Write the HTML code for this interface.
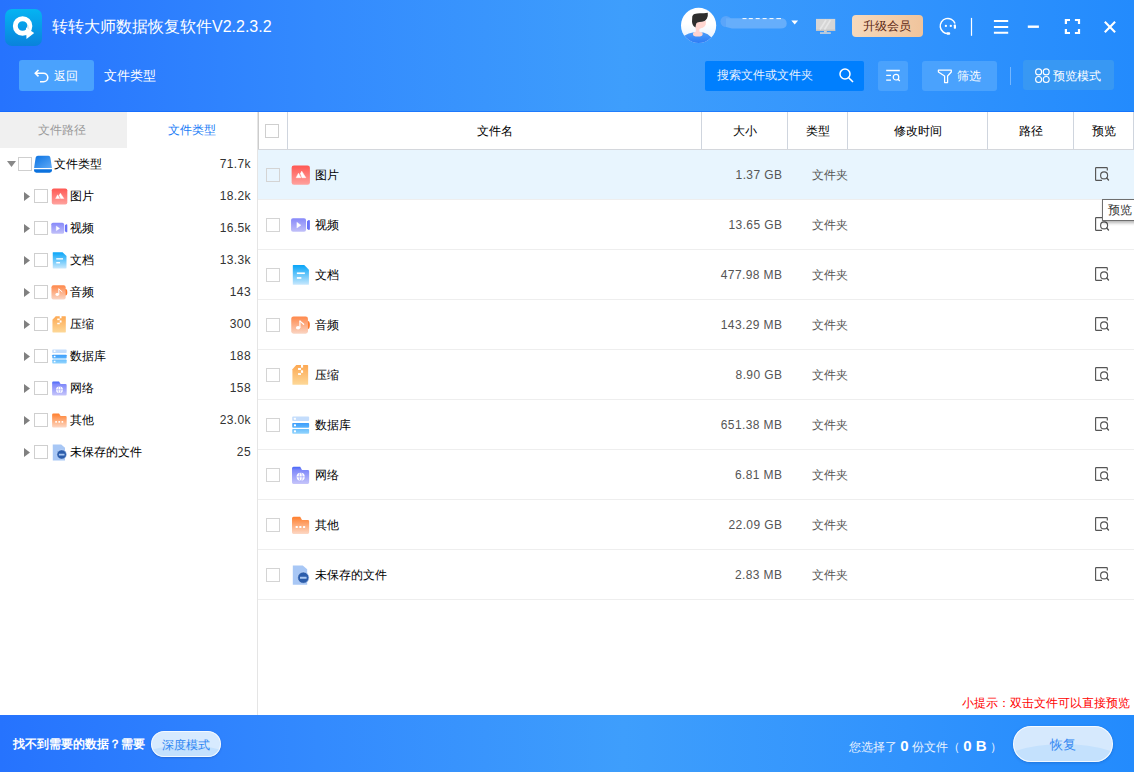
<!DOCTYPE html>
<html><head><meta charset="utf-8">
<style>
*{margin:0;padding:0;box-sizing:border-box}
html,body{width:1134px;height:772px;overflow:hidden;background:#fff;font-family:"Liberation Sans",sans-serif;font-size:12px;color:#333}
.a{position:absolute}
.grad{background:linear-gradient(90deg,#2673fe 0%,#338afe 28%,#3e9efc 55%,#3193fd 80%,#238bfd 100%)}
#hdr{left:0;top:0;width:1134px;height:112px}
.wt{color:#fff}
.btn{background:#4aa2fd;border-radius:3px}
.cb{position:absolute;width:14px;height:14px;border:1px solid #cfcfcf;background:#fff}
.tri-r{position:absolute;width:0;height:0;border-top:5px solid transparent;border-bottom:5px solid transparent;border-left:6px solid #666}
.tri-d{position:absolute;width:0;height:0;border-left:5px solid transparent;border-right:5px solid transparent;border-top:6px solid #777}
.tl{position:absolute;line-height:16px;color:#000}
.cnt{position:absolute;right:6px;text-align:right;line-height:16px;color:#333;letter-spacing:.4px;margin-right:-.4px}
.vl{position:absolute;width:1px;background:#cfd5de}
.hl{position:absolute;height:1px;background:#eeeeee}
.th{position:absolute;top:113px;height:36px;line-height:36px;text-align:center;color:#000}
.row{position:absolute;left:258px;width:876px;height:50px}
.nm{position:absolute;left:315px;line-height:16px;color:#000}
.sz{position:absolute;right:352px;line-height:16px;color:#555;text-align:right;letter-spacing:.4px;margin-right:-.4px}
.tp{position:absolute;left:812px;line-height:16px;color:#555}
</style></head><body>
<svg width="0" height="0" style="position:absolute">
<defs>
<linearGradient id="gPic" x1="0" y1="0" x2="0" y2="1"><stop offset="0" stop-color="#ff5853"/><stop offset="1" stop-color="#ffa29e"/></linearGradient>
<linearGradient id="gVid" x1="0" y1="0" x2="0" y2="1"><stop offset="0" stop-color="#8789fa"/><stop offset="1" stop-color="#c1c0f8"/></linearGradient>
<linearGradient id="gDoc" x1="0" y1="0" x2="0" y2="1"><stop offset="0" stop-color="#08a5f8"/><stop offset="1" stop-color="#c8e8fd"/></linearGradient>
<linearGradient id="gAud" x1="0" y1="0" x2="0" y2="1"><stop offset="0" stop-color="#ff884a"/><stop offset="1" stop-color="#fad5c3"/></linearGradient>
<linearGradient id="gZip" x1="0" y1="0" x2="0" y2="1"><stop offset="0" stop-color="#fda852"/><stop offset="1" stop-color="#fdd898"/></linearGradient>
<linearGradient id="gDb2" x1="0" y1="0" x2="0" y2="1"><stop offset="0" stop-color="#3d9dfb"/><stop offset="1" stop-color="#5cb4fc"/></linearGradient>
<linearGradient id="gDb3" x1="0" y1="0" x2="0" y2="1"><stop offset="0" stop-color="#6bbffd"/><stop offset="1" stop-color="#92d4fd"/></linearGradient>
<linearGradient id="gNet" x1="0" y1="0" x2="0" y2="1"><stop offset="0" stop-color="#4767f7"/><stop offset=".2" stop-color="#7f89fa"/><stop offset="1" stop-color="#c6c5fa"/></linearGradient>
<linearGradient id="gOth" x1="0" y1="0" x2="0" y2="1"><stop offset="0" stop-color="#ff7f2e"/><stop offset="1" stop-color="#fdd8c5"/></linearGradient>
<linearGradient id="gRoot" x1="0" y1="0" x2="1" y2="1"><stop offset="0" stop-color="#0a72e2"/><stop offset="1" stop-color="#5eaaf7"/></linearGradient>
<linearGradient id="gLogo" x1="0" y1="0" x2="0" y2="1"><stop offset="0" stop-color="#05b4f2"/><stop offset="1" stop-color="#0a82dc"/></linearGradient>
<symbol id="iPic" viewBox="0 0 772 772"><rect x="145" y="140" width="470" height="500" rx="60" fill="url(#gPic)"/><g fill="#fff" stroke="#fff" stroke-width="14" stroke-linejoin="round"><path d="M262 455 L322 340 L383 455 Z"/><path d="M372 350 L405 288 L510 455 L412 455 Z"/></g></symbol>
<symbol id="iVid" viewBox="0 0 772 772"><rect x="130" y="210" width="385" height="350" rx="50" fill="url(#gVid)"/><path d="M540 290 L585 258 Q615 250 615 285 V485 Q615 520 585 512 L540 480 Z" fill="#6a73f8"/><path d="M280 315 L385 390 L280 462 Z" fill="#fff" stroke="#fff" stroke-width="10" stroke-linejoin="round"/></symbol>
<symbol id="iDoc" viewBox="0 0 772 772"><path d="M190 130 H470 L590 250 V625 Q590 640 575 640 H190 Q175 640 175 625 V145 Q175 130 190 130 Z" fill="url(#gDoc)"/><rect x="280" y="320" width="205" height="42" fill="#fff"/><rect x="280" y="440" width="115" height="45" fill="#fff"/></symbol>
<symbol id="iAud" viewBox="0 0 772 772"><ellipse cx="562" cy="387" rx="52" ry="103" fill="#ff7a2c"/><rect x="135" y="165" width="430" height="445" rx="60" fill="url(#gAud)"/><rect x="343" y="272" width="30" height="190" fill="#fff"/><path d="M362 285 L455 368" stroke="#fff" stroke-width="30" stroke-linecap="round"/><ellipse cx="310" cy="455" rx="55" ry="44" fill="#fff"/></symbol>
<symbol id="iZip" viewBox="0 0 772 772"><path d="M265 130 H555 Q570 130 570 145 V625 Q570 640 555 640 H180 Q165 640 165 625 V240 Z" fill="url(#gZip)"/><g fill="#fff"><rect x="385" y="125" width="55" height="72"/><rect x="310" y="205" width="75" height="52"/><rect x="385" y="265" width="55" height="65"/><rect x="310" y="338" width="75" height="47"/></g></symbol>
<symbol id="iDb" viewBox="0 0 772 772"><rect x="160" y="170" width="435" height="112" rx="22" fill="#c4ddfc"/><rect x="160" y="335" width="435" height="120" rx="22" fill="url(#gDb2)"/><rect x="160" y="490" width="435" height="120" rx="22" fill="url(#gDb3)"/><g fill="#fff"><rect x="205" y="200" width="52" height="52" rx="10"/><rect x="205" y="367" width="52" height="52" rx="10"/><rect x="205" y="522" width="52" height="52" rx="10"/></g></symbol>
<symbol id="iNet" viewBox="0 0 772 772"><path d="M155 215 Q155 175 195 175 H365 L412 255 H560 Q595 255 595 290 V580 Q595 615 560 615 H190 Q155 615 155 580 Z" fill="url(#gNet)"/><circle cx="378" cy="432" r="105" fill="#fff"/><g fill="none" stroke="#9ea2f9" stroke-width="18"><path d="M270 432 H486"/><ellipse cx="378" cy="432" rx="42" ry="105"/></g></symbol>
<symbol id="iOth" viewBox="0 0 772 772"><path d="M155 215 Q155 175 195 175 H365 L412 255 H560 Q595 255 595 290 V580 Q595 615 560 615 H190 Q155 615 155 580 Z" fill="url(#gOth)"/><g fill="#fff"><rect x="248" y="410" width="55" height="55" rx="14"/><rect x="343" y="410" width="55" height="55" rx="14"/><rect x="438" y="410" width="55" height="55" rx="14"/></g></symbol>
<symbol id="iUns" viewBox="0 0 772 772"><path d="M175 140 H430 L545 240 V640 H175 Z" fill="#a8c7f5"/><circle cx="445" cy="455" r="145" fill="#2c5dab" stroke="#cfe0f8" stroke-width="14"/><rect x="360" y="433" width="170" height="50" rx="6" fill="#a9c8f2"/></symbol>
<symbol id="iPrev" viewBox="0 0 30 30"><g fill="none" stroke="#555" stroke-width="1.15"><path d="M19.3 10.6 V8.3 Q19.3 7.6 18.6 7.6 H8.3 Q7.6 7.6 7.6 8.3 V19.7 Q7.6 20.4 8.3 20.4 H14"/><circle cx="16.1" cy="15.4" r="3.5"/><path d="M18.7 18 L20.5 19.9" stroke-width="1.4" stroke-linecap="round"/></g></symbol>
</defs></svg>

<!-- HEADER -->
<div id="hdr" class="a grad"></div>
<div class="a" style="left:0;top:111px;width:1134px;height:1px;background:rgba(10,100,254,.55)"></div>
<svg class="a" style="left:5px;top:9px" width="37" height="37" viewBox="0 0 37 37"><rect width="37" height="37" rx="7" fill="url(#gLogo)"/><circle cx="17.6" cy="17" r="7.3" fill="none" stroke="#fff" stroke-width="4.9"/><path d="M21 18.5 L29.2 24 L21.5 30 Z" fill="#fff"/><path d="M21.5 18.8 L24.5 21 L23.5 16 Z" fill="#dfe9f0"/></svg>
<div class="a wt" style="left:52px;top:16px;font-size:16px;line-height:22px">转转大师数据恢复软件V2.2.3.2</div>

<div class="a btn" style="left:19px;top:60px;width:75px;height:31px"></div>
<svg class="a" style="left:34px;top:69px" width="16" height="15" viewBox="0 0 16 15"><path d="M4.5 1 L1.3 4.2 L4.5 7.4 M1.6 4.2 H9.5 A4.3 4.3 0 0 1 9.5 12.8 H6" fill="none" stroke="#fff" stroke-width="1.6"/></svg>
<div class="a wt" style="left:54px;top:67px;font-size:12px;line-height:18px">返回</div>
<div class="a wt" style="left:104px;top:67px;font-size:13px;line-height:18px">文件类型</div>

<!-- top right -->
<svg class="a" style="left:660px;top:0" width="474" height="50" viewBox="660 0 474 50">
<defs>
<linearGradient id="gAvBg" x1="0" y1="0" x2="0" y2="1"><stop offset=".45" stop-color="#fff"/><stop offset="1" stop-color="#e2effe"/></linearGradient>
<linearGradient id="gAvBody" x1="0" y1="0" x2="0" y2="1"><stop offset="0" stop-color="#4a9dfb"/><stop offset="1" stop-color="#2a78f4"/></linearGradient>
<clipPath id="avc"><circle cx="698.6" cy="25.4" r="17.6"/></clipPath>
</defs>
<circle cx="698.6" cy="25.4" r="17.6" fill="url(#gAvBg)"/>
<g clip-path="url(#avc)">
<path d="M681 37 L684.2 35.8 Q689 33 692.9 32.6 H703.4 Q708 33.5 711.5 37.5 L716 40 V44 H681 Z" fill="url(#gAvBody)"/>
<ellipse cx="697.8" cy="34" rx="4.9" ry="2.6" fill="#ffd3cf"/>
<rect x="695.8" y="26" width="3.6" height="7" fill="#ffd3cf"/>
<path d="M695.2 22.1 L706 20.9 L705.7 24.4 Q705 26.5 703.4 27.3 L699.3 29.1 L695.8 29.1 Z" fill="#ffd6d1"/>
</g>
<path d="M692.3 16.2 Q693 14.5 694.5 14 Q697 13.2 700 13.2 Q704 13.2 707.8 12.7 Q708.2 16 706.9 18.6 Q705.8 20.3 704.6 20.9 Q702 21.8 699.3 22.1 Q697 22.6 696.4 23.2 Q695.6 25 695.5 27.6 Q693.3 26 692.9 25 Q692 23 692 21.5 Z" fill="#2e2e2e"/>
<circle cx="726" cy="21.5" r="5.5" fill="#5aa5fa"/>
<path d="M726 18.3 H780.5 Q786.7 18.3 786.7 23.5 Q786.7 28.6 780.5 28.6 H732 L726 27 Z" fill="#66aefb"/>
<path d="M742.5 18.6 H746.5 M748.8 18.6 H752.8 M755.7 18.6 H759.7 M762.6 18.6 H766.6 M769.5 18.6 H773.5 M776.4 18.6 H781" stroke="#fff" stroke-width="1"/>
<path d="M791.3 20.6 H798.1 L794.7 24.6 Z" fill="#fff"/>
<rect x="816" y="18.9" width="19.2" height="12" fill="#d6d6d6"/>
<rect x="816" y="29.6" width="19.2" height="1.3" fill="#c4c4c4"/>
<path d="M820 29.5 L826 20 M824.5 29.5 L830.5 20" stroke="#e6e6e6" stroke-width="1.6"/>
<rect x="824" y="30.9" width="2.8" height="1.5" fill="#d0d0d0"/>
<rect x="820" y="32.3" width="10.8" height="1.5" fill="#d6d6d6"/>
<path d="M948.3 33.6 A7.6 7.6 0 1 1 955 23.5" fill="none" stroke="#fff" stroke-width="1.5"/>
<rect x="953.8" y="24.5" width="2.2" height="4.2" rx=".8" fill="#fff"/>
<rect x="946.6" y="32.3" width="3.6" height="2.4" rx="1" fill="#fff"/>
<circle cx="945.9" cy="25.9" r="1.15" fill="#fff"/>
<circle cx="950.8" cy="25.9" r="1.15" fill="#fff"/>
<rect x="970.9" y="17.9" width="1.2" height="17.9" fill="#fff"/>
<path d="M993.9 20.9 H1008.2 M993.9 26.9 H1008.2 M993.9 32.8 H1008.2" stroke="#fff" stroke-width="2"/>
<rect x="1027.8" y="25.5" width="11.1" height="2.4" fill="#fff"/>
<path d="M1065.9 24 V20 H1070 M1074.9 20 H1079 V24 M1079 29 V33 H1074.9 M1070 33 H1065.9 V29" fill="none" stroke="#fff" stroke-width="2.2"/>
<path d="M1104.8 21.8 L1115.1 32.2 M1115.1 21.8 L1104.8 32.2" stroke="#fff" stroke-width="2.1"/>
</svg>
<div class="a" style="left:852px;top:15px;width:71px;height:22px;border-radius:4px;background:linear-gradient(90deg,#f6d9bc,#f0c49c);color:#5a2511;text-align:center;line-height:22px;font-size:12px;text-indent:-2px">升级会员</div>

<!-- toolbar -->
<div class="a" style="left:705px;top:61px;width:159px;height:30px;background:#007ffe;border-radius:2px"></div>
<div class="a wt" style="left:717px;top:67px;line-height:17px;color:#e6f0ff">搜索文件或文件夹</div>
<svg class="a" style="left:839px;top:68px" width="15" height="15" viewBox="0 0 15 15"><circle cx="6" cy="6" r="5" fill="none" stroke="#fff" stroke-width="1.5"/><path d="M9.7 9.7 L14 14" stroke="#fff" stroke-width="1.6"/></svg>
<div class="a btn" style="left:878px;top:61px;width:30px;height:30px"></div>
<svg class="a" style="left:886px;top:69px" width="15" height="14" viewBox="0 0 15 14"><path d="M0.2 1.5 H13.8 M0.2 6.4 H5 M0.2 11.2 H5" stroke="#fff" stroke-width="1.3"/><circle cx="10" cy="8.2" r="2.8" fill="none" stroke="#fff" stroke-width="1.2"/><path d="M12 10.2 L13.8 12" stroke="#fff" stroke-width="1.3"/></svg>
<div class="a btn" style="left:922px;top:61px;width:75px;height:30px"></div>
<svg class="a" style="left:936px;top:68px" width="17" height="17" viewBox="936 68 17 17"><path d="M938.4 70.2 H951.3 V72 L947.6 76 V82.6 H944.6 V76 L938.4 72 Z" fill="none" stroke="#fff" stroke-width="1.25" stroke-linejoin="round"/></svg>
<div class="a wt" style="left:957px;top:68px;line-height:17px">筛选</div>
<div class="a" style="left:1010px;top:67px;width:1px;height:18px;background:rgba(255,255,255,.35)"></div>
<div class="a btn" style="left:1023px;top:60px;width:91px;height:30px;background:#3898f3"></div>
<svg class="a" style="left:1034px;top:68px" width="17" height="16" viewBox="1034 68 17 16"><g fill="none" stroke="#fff" stroke-width="1.1"><circle cx="1038.6" cy="71.9" r="3"/><circle cx="1046.2" cy="71.9" r="3"/><circle cx="1038.6" cy="79.5" r="3"/><circle cx="1046.2" cy="79.5" r="3"/></g></svg>
<div class="a wt" style="left:1053px;top:68px;line-height:17px">预览模式</div>

<!-- LEFT PANEL -->
<div class="a" style="left:0;top:112px;width:127px;height:36px;background:#f0f0f0"></div>
<div class="a" style="left:0;top:112px;width:123px;height:36px;line-height:36px;text-align:center;color:#9a9a9a">文件路径</div>
<div class="a" style="left:127px;top:112px;width:130px;height:36px;line-height:36px;text-align:center;color:#1b7df6">文件类型</div>
<div class="vl" style="left:257px;top:112px;height:603px;background:#e5e5e5"></div>

<div id="tree">
<svg class="a" style="left:7px;top:161px" width="9" height="6"><path d="M0 0 H9 L4.5 6 Z" fill="#888"/></svg>
<div class="cb" style="left:18px;top:157px"></div>
<svg class="a" style="left:30px;top:150px" width="30" height="30" viewBox="0 0 772 772"><path d="M205 150 H475 Q515 150 525 200 L565 460 H105 L145 200 Q155 150 205 150 Z" fill="url(#gRoot)"/><path d="M105 495 H565 V530 Q565 585 505 585 H165 Q105 585 105 530 Z" fill="#0b72de"/></svg>
<div class="tl" style="left:54px;top:156px">文件类型</div>
<div class="cnt" style="left:200px;width:51px;top:156px">71.7k</div>
<svg class="a" style="left:24px;top:192px" width="6" height="9"><path d="M0 0 V9 L6 4.5 Z" fill="#808080"/></svg>
<div class="cb" style="left:34px;top:189px"></div>
<svg class="a" style="left:46.6px;top:183.57px" width="25.5" height="24.6" viewBox="0 0 772 772" preserveAspectRatio="none"><use href="#iPic"/></svg>
<div class="tl" style="left:70px;top:188px">图片</div>
<div class="cnt" style="left:200px;width:51px;top:188px">18.2k</div>
<svg class="a" style="left:24px;top:224px" width="6" height="9"><path d="M0 0 V9 L6 4.5 Z" fill="#808080"/></svg>
<div class="cb" style="left:34px;top:221px"></div>
<svg class="a" style="left:46.6px;top:215.57px" width="25.5" height="24.6" viewBox="0 0 772 772" preserveAspectRatio="none"><use href="#iVid"/></svg>
<div class="tl" style="left:70px;top:220px">视频</div>
<div class="cnt" style="left:200px;width:51px;top:220px">16.5k</div>
<svg class="a" style="left:24px;top:256px" width="6" height="9"><path d="M0 0 V9 L6 4.5 Z" fill="#808080"/></svg>
<div class="cb" style="left:34px;top:253px"></div>
<svg class="a" style="left:46.6px;top:247.57px" width="25.5" height="24.6" viewBox="0 0 772 772" preserveAspectRatio="none"><use href="#iDoc"/></svg>
<div class="tl" style="left:70px;top:252px">文档</div>
<div class="cnt" style="left:200px;width:51px;top:252px">13.3k</div>
<svg class="a" style="left:24px;top:288px" width="6" height="9"><path d="M0 0 V9 L6 4.5 Z" fill="#808080"/></svg>
<div class="cb" style="left:34px;top:285px"></div>
<svg class="a" style="left:46.6px;top:279.57px" width="25.5" height="24.6" viewBox="0 0 772 772" preserveAspectRatio="none"><use href="#iAud"/></svg>
<div class="tl" style="left:70px;top:284px">音频</div>
<div class="cnt" style="left:200px;width:51px;top:284px">143</div>
<svg class="a" style="left:24px;top:320px" width="6" height="9"><path d="M0 0 V9 L6 4.5 Z" fill="#808080"/></svg>
<div class="cb" style="left:34px;top:317px"></div>
<svg class="a" style="left:46.6px;top:311.57px" width="25.5" height="24.6" viewBox="0 0 772 772" preserveAspectRatio="none"><use href="#iZip"/></svg>
<div class="tl" style="left:70px;top:316px">压缩</div>
<div class="cnt" style="left:200px;width:51px;top:316px">300</div>
<svg class="a" style="left:24px;top:352px" width="6" height="9"><path d="M0 0 V9 L6 4.5 Z" fill="#808080"/></svg>
<div class="cb" style="left:34px;top:349px"></div>
<svg class="a" style="left:46.6px;top:343.57px" width="25.5" height="24.6" viewBox="0 0 772 772" preserveAspectRatio="none"><use href="#iDb"/></svg>
<div class="tl" style="left:70px;top:348px">数据库</div>
<div class="cnt" style="left:200px;width:51px;top:348px">188</div>
<svg class="a" style="left:24px;top:384px" width="6" height="9"><path d="M0 0 V9 L6 4.5 Z" fill="#808080"/></svg>
<div class="cb" style="left:34px;top:381px"></div>
<svg class="a" style="left:46.6px;top:375.57px" width="25.5" height="24.6" viewBox="0 0 772 772" preserveAspectRatio="none"><use href="#iNet"/></svg>
<div class="tl" style="left:70px;top:380px">网络</div>
<div class="cnt" style="left:200px;width:51px;top:380px">158</div>
<svg class="a" style="left:24px;top:416px" width="6" height="9"><path d="M0 0 V9 L6 4.5 Z" fill="#808080"/></svg>
<div class="cb" style="left:34px;top:413px"></div>
<svg class="a" style="left:46.6px;top:407.57px" width="25.5" height="24.6" viewBox="0 0 772 772" preserveAspectRatio="none"><use href="#iOth"/></svg>
<div class="tl" style="left:70px;top:412px">其他</div>
<div class="cnt" style="left:200px;width:51px;top:412px">23.0k</div>
<svg class="a" style="left:24px;top:448px" width="6" height="9"><path d="M0 0 V9 L6 4.5 Z" fill="#808080"/></svg>
<div class="cb" style="left:34px;top:445px"></div>
<svg class="a" style="left:46.6px;top:439.57px" width="25.5" height="24.6" viewBox="0 0 772 772" preserveAspectRatio="none"><use href="#iUns"/></svg>
<div class="tl" style="left:70px;top:444px">未保存的文件</div>
<div class="cnt" style="left:200px;width:51px;top:444px">25</div>
</div>

<!-- TABLE -->
<div class="a" style="left:258px;top:149px;width:876px;height:1px;background:#d4d7dc"></div>
<div class="vl" style="left:258px;top:112px;height:37px;background:#cccccc"></div>
<div class="vl" style="left:287px;top:112px;height:37px"></div>
<div class="vl" style="left:701px;top:112px;height:37px"></div>
<div class="vl" style="left:787px;top:112px;height:37px"></div>
<div class="vl" style="left:847px;top:112px;height:37px"></div>
<div class="vl" style="left:987px;top:112px;height:37px"></div>
<div class="vl" style="left:1073px;top:112px;height:37px"></div>
<div class="vl" style="left:1133px;top:112px;height:37px"></div>
<div class="cb" style="left:265px;top:124px"></div>
<div class="th" style="left:288px;width:413px">文件名</div>
<div class="th" style="left:702px;width:85px">大小</div>
<div class="th" style="left:788px;width:59px">类型</div>
<div class="th" style="left:848px;width:139px">修改时间</div>
<div class="th" style="left:988px;width:85px">路径</div>
<div class="th" style="left:1074px;width:59px">预览</div>

<div id="rows">
<div class="row" style="top:150px;background:#e8f5fe;"></div>
<div class="hl" style="left:258px;width:876px;top:199px"></div>
<div class="cb" style="left:266px;top:168px;border-color:#d4d4d4;background:transparent"></div>
<svg class="a" style="left:286px;top:160px" width="30" height="30" viewBox="0 0 772 772"><use href="#iPic"/></svg>
<div class="nm" style="top:167px">图片</div>
<div class="sz" style="top:167px">1.37 GB</div>
<div class="tp" style="top:167px">文件夹</div>
<svg class="a" style="left:1088px;top:160px" width="30" height="30"><use href="#iPrev"/></svg>
<div class="row" style="top:200px;"></div>
<div class="hl" style="left:258px;width:876px;top:249px"></div>
<div class="cb" style="left:266px;top:218px;border-color:#d4d4d4;background:transparent"></div>
<svg class="a" style="left:286px;top:210px" width="30" height="30" viewBox="0 0 772 772"><use href="#iVid"/></svg>
<div class="nm" style="top:217px">视频</div>
<div class="sz" style="top:217px">13.65 GB</div>
<div class="tp" style="top:217px">文件夹</div>
<svg class="a" style="left:1088px;top:210px" width="30" height="30"><use href="#iPrev"/></svg>
<div class="row" style="top:250px;"></div>
<div class="hl" style="left:258px;width:876px;top:299px"></div>
<div class="cb" style="left:266px;top:268px;border-color:#d4d4d4;background:transparent"></div>
<svg class="a" style="left:286px;top:260px" width="30" height="30" viewBox="0 0 772 772"><use href="#iDoc"/></svg>
<div class="nm" style="top:267px">文档</div>
<div class="sz" style="top:267px">477.98 MB</div>
<div class="tp" style="top:267px">文件夹</div>
<svg class="a" style="left:1088px;top:260px" width="30" height="30"><use href="#iPrev"/></svg>
<div class="row" style="top:300px;"></div>
<div class="hl" style="left:258px;width:876px;top:349px"></div>
<div class="cb" style="left:266px;top:318px;border-color:#d4d4d4;background:transparent"></div>
<svg class="a" style="left:286px;top:310px" width="30" height="30" viewBox="0 0 772 772"><use href="#iAud"/></svg>
<div class="nm" style="top:317px">音频</div>
<div class="sz" style="top:317px">143.29 MB</div>
<div class="tp" style="top:317px">文件夹</div>
<svg class="a" style="left:1088px;top:310px" width="30" height="30"><use href="#iPrev"/></svg>
<div class="row" style="top:350px;"></div>
<div class="hl" style="left:258px;width:876px;top:399px"></div>
<div class="cb" style="left:266px;top:368px;border-color:#d4d4d4;background:transparent"></div>
<svg class="a" style="left:286px;top:360px" width="30" height="30" viewBox="0 0 772 772"><use href="#iZip"/></svg>
<div class="nm" style="top:367px">压缩</div>
<div class="sz" style="top:367px">8.90 GB</div>
<div class="tp" style="top:367px">文件夹</div>
<svg class="a" style="left:1088px;top:360px" width="30" height="30"><use href="#iPrev"/></svg>
<div class="row" style="top:400px;"></div>
<div class="hl" style="left:258px;width:876px;top:449px"></div>
<div class="cb" style="left:266px;top:418px;border-color:#d4d4d4;background:transparent"></div>
<svg class="a" style="left:286px;top:410px" width="30" height="30" viewBox="0 0 772 772"><use href="#iDb"/></svg>
<div class="nm" style="top:417px">数据库</div>
<div class="sz" style="top:417px">651.38 MB</div>
<div class="tp" style="top:417px">文件夹</div>
<svg class="a" style="left:1088px;top:410px" width="30" height="30"><use href="#iPrev"/></svg>
<div class="row" style="top:450px;"></div>
<div class="hl" style="left:258px;width:876px;top:499px"></div>
<div class="cb" style="left:266px;top:468px;border-color:#d4d4d4;background:transparent"></div>
<svg class="a" style="left:286px;top:460px" width="30" height="30" viewBox="0 0 772 772"><use href="#iNet"/></svg>
<div class="nm" style="top:467px">网络</div>
<div class="sz" style="top:467px">6.81 MB</div>
<div class="tp" style="top:467px">文件夹</div>
<svg class="a" style="left:1088px;top:460px" width="30" height="30"><use href="#iPrev"/></svg>
<div class="row" style="top:500px;"></div>
<div class="hl" style="left:258px;width:876px;top:549px"></div>
<div class="cb" style="left:266px;top:518px;border-color:#d4d4d4;background:transparent"></div>
<svg class="a" style="left:286px;top:510px" width="30" height="30" viewBox="0 0 772 772"><use href="#iOth"/></svg>
<div class="nm" style="top:517px">其他</div>
<div class="sz" style="top:517px">22.09 GB</div>
<div class="tp" style="top:517px">文件夹</div>
<svg class="a" style="left:1088px;top:510px" width="30" height="30"><use href="#iPrev"/></svg>
<div class="row" style="top:550px;"></div>
<div class="hl" style="left:258px;width:876px;top:599px"></div>
<div class="cb" style="left:266px;top:568px;border-color:#d4d4d4;background:transparent"></div>
<svg class="a" style="left:286px;top:560px" width="30" height="30" viewBox="0 0 772 772"><use href="#iUns"/></svg>
<div class="nm" style="top:567px">未保存的文件</div>
<div class="sz" style="top:567px">2.83 MB</div>
<div class="tp" style="top:567px">文件夹</div>
<svg class="a" style="left:1088px;top:560px" width="30" height="30"><use href="#iPrev"/></svg>
</div>

<!-- tooltip -->
<div class="a" style="left:1102px;top:199px;width:40px;height:22px;background:#fff;border:1px solid #6e6e6e;box-shadow:1px 2px 3px rgba(0,0,0,.3);line-height:20px;padding-left:5px;color:#333">预览</div>

<div class="a" style="left:962px;top:695px;color:#ff0000;line-height:16px">小提示：双击文件可以直接预览</div>

<!-- FOOTER -->
<div class="a grad" style="left:0;top:715px;width:1134px;height:57px"></div>
<div class="a wt" style="left:13px;top:736px;font-weight:bold;line-height:17px">找不到需要的数据？需要</div>
<div class="a" style="left:151px;top:731px;width:70px;height:26px;border-radius:13px;background:#d7eafe;box-shadow:0 1px 2px rgba(0,40,120,.25);overflow:hidden"><div class="a" style="left:-12px;right:-12px;top:14px;height:30px;border-radius:50%;background:#c3e0fd"></div><div class="a" style="left:0;top:0;width:70px;height:26px;border-radius:13px;box-shadow:inset 0 0 0 1px rgba(255,255,255,.75)"></div><div class="a" style="left:0;top:0;width:70px;text-align:center;line-height:28px;color:#2f87f3">深度模式</div></div>
<div class="a wt" style="left:849px;top:736px;line-height:19px;color:#eaf2ff">您选择了 <b style="font-size:15px;color:#fff">0</b> 份文件（ <b style="font-size:15px;color:#fff">0 B</b> ）</div>
<div class="a" style="left:1013px;top:726px;width:100px;height:36px;border-radius:18px;background:#d6e9fd;box-shadow:0 1px 3px rgba(0,40,120,.25);overflow:hidden"><div class="a" style="left:-15px;right:-15px;top:18px;height:44px;border-radius:50%;background:#c4e1fd"></div><div class="a" style="left:0;top:0;width:100px;height:36px;border-radius:18px;box-shadow:inset 0 0 0 1px rgba(255,255,255,.8)"></div><div class="a" style="left:0;top:0;width:100px;text-align:center;line-height:38px;color:#3388f2;font-size:13px">恢复</div></div>
</body></html>
